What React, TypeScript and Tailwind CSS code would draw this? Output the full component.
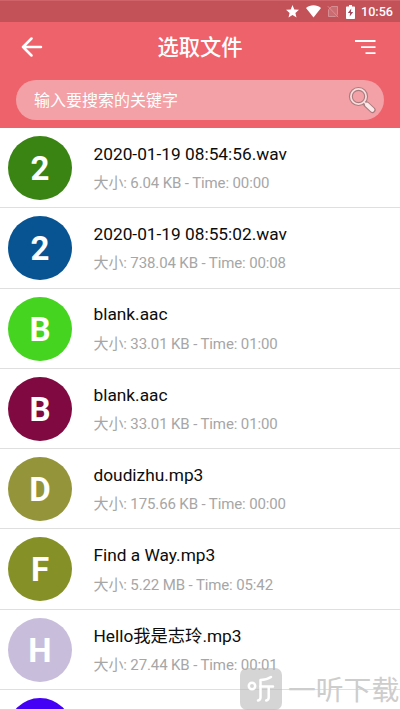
import React from "react";

type AudioFile = {
  letter: string;
  color: string;
  name: string;
  info: string;
};

const files: AudioFile[] = [
  { letter: "2", color: "bg-[#3a8413]", name: "2020-01-19 08:54:56.wav", info: "大小: 6.04 KB - Time: 00:00" },
  { letter: "2", color: "bg-[#085493]", name: "2020-01-19 08:55:02.wav", info: "大小: 738.04 KB - Time: 00:08" },
  { letter: "B", color: "bg-[#45d41f]", name: "blank.aac", info: "大小: 33.01 KB - Time: 01:00" },
  { letter: "B", color: "bg-[#810941]", name: "blank.aac", info: "大小: 33.01 KB - Time: 01:00" },
  { letter: "D", color: "bg-[#94953a]", name: "doudizhu.mp3", info: "大小: 175.66 KB - Time: 00:00" },
  { letter: "F", color: "bg-[#859126]", name: "Find a Way.mp3", info: "大小: 5.22 MB - Time: 05:42" },
  { letter: "H", color: "bg-[#c8bedb]", name: "Hello我是志玲.mp3", info: "大小: 27.44 KB - Time: 00:01" },
];

const StatusBar = () => (
  <div className="flex h-[22px] items-center justify-end border-t border-[#d0626a] bg-[#c25158] pr-[7px] text-white">
    <svg width="13" height="13" viewBox="0 0 13 13" className="mr-[7px]" fill="currentColor">
      <path d="M6.5 0l1.8 4.4 4.7.4-3.6 3.1 1.1 4.6-4-2.5-4 2.5 1.1-4.6L0 4.8l4.7-.4z" />
    </svg>
    <svg width="15" height="13" viewBox="0 0 15 13" className="mr-[6px]" fill="currentColor">
      <path d="M0 3C4-.6 11-.6 15 3L7.5 12.6z" />
    </svg>
    <svg width="12" height="13" viewBox="0 0 12 13" className="mr-[7px] opacity-35">
      <path d="M1 4.5L4.5 1H11v11H1z" fill="currentColor" opacity=".45" />
      <path d="M1.5 4.6L4.6 1.5h5.9v8.2M1.5 5v6.5h7M.8 1.2l10.4 11" fill="none" stroke="currentColor" />
    </svg>
    <svg width="9" height="14" viewBox="0 0 9 14" className="mr-[6px]">
      <path d="M3 0h3v1.4h2.2q.8 0 .8.8v11q0 .8-.8.8H.8Q0 14 0 13.2v-11q0-.8.8-.8H3z" fill="currentColor" />
      <path d="M5.3 3.5L1.8 8h2.3L3.7 11.4 7.2 6.9H4.9z" fill="#a4485d" />
    </svg>
    <span className="text-[12.6px] leading-4 font-medium">10:56</span>
  </div>
);

const SearchIcon = () => (
  <svg width="28" height="28" viewBox="0 0 28 28" fill="none">
    <path d="M18.5 18.5l6 5.5" stroke="#a87c7e" strokeWidth="6.2" strokeLinecap="round" />
    <path d="M15.5 15.5l3 3" stroke="#a87c7e" strokeWidth="3.5" />
    <circle cx="10.5" cy="10.5" r="7.6" stroke="#a87c7e" strokeWidth="4" />
    <circle cx="10.5" cy="10.5" r="7.6" stroke="#f9dcdd" strokeWidth="1.8" />
    <path d="M16 16l2.5 2.5" stroke="#f9dcdd" strokeWidth="1.5" />
    <path d="M19 18.8l5.3 5" stroke="#fbe9e9" strokeWidth="4.2" strokeLinecap="round" />
  </svg>
);

const Header = () => (
  <header className="h-[128px] shrink-0 bg-[#ee626b]">
    <StatusBar />
    <div className="flex h-[50px] items-center justify-between pr-[24px] pl-[21px] text-white">
      <button aria-label="Back" className="w-[24px]">
        <svg width="22" height="20" viewBox="0 0 22 20" fill="none" stroke="currentColor" strokeWidth="2.5" strokeLinecap="round" strokeLinejoin="round">
          <path d="M20 10H2M10.5 1.5L2 10l8.5 8.5" />
        </svg>
      </button>
      <h1 className="pt-[2px] text-[21.3px] leading-[30px] font-medium">选取文件</h1>
      <button aria-label="Sort" className="w-[21px]">
        <svg width="21" height="16" viewBox="0 0 21 16" fill="none" stroke="currentColor" strokeWidth="1.8">
          <path d="M0 2h20.5M6 8.2h14.5M10.5 14.2h10" />
        </svg>
      </button>
    </div>
    <div className="mx-4 mt-2 flex h-10 items-center justify-between rounded-full bg-[#f3a0a6] pr-2 pl-[18px]">
      <span className="pt-[2px] text-[16px] leading-6 text-white">输入要搜索的关键字</span>
      <SearchIcon />
    </div>
  </header>
);

const FileRow = ({ file }: { file: AudioFile }) => (
  <li className="flex h-[80.3px] shrink-0 border-b border-[#dfdfdf] pl-2">
    <div className={`mt-2 flex size-16 shrink-0 items-center justify-center rounded-full ${file.color}`}>
      <span className="pt-[2px] text-[33px] leading-10 font-bold text-white">{file.letter}</span>
    </div>
    <div className="ml-[21.5px] pt-[13.9px] whitespace-nowrap">
      <p className="h-6 text-[17.3px] leading-6 text-[#0c0c0c]">{file.name}</p>
      <p className="mt-[5.2px] h-6 text-[15px] leading-6 tracking-[-0.12px] text-[#a6a6a6]">{file.info}</p>
    </div>
  </li>
);

const Watermark = () => (
  <div className="absolute top-[668px] left-[240px] flex h-[42px] w-[160px] items-center whitespace-nowrap">
    <svg width="42" height="42" viewBox="0 0 42 42" className="shrink-0" fill="none">
      <rect width="42" height="42" rx="7" fill="#b9b9b9" fillOpacity=".6" />
      <g stroke="#fff" strokeWidth="2.5" strokeLinecap="round" strokeLinejoin="round">
        <circle cx="12" cy="18" r="3.2" />
        <path d="M31 9q-4 2.8-10.5 3V29.5q0 2.5-2.5 3" />
        <path d="M20.5 18.5H33M28.7 18.5V29.5q0 2.5-2.5 3" />
      </g>
    </svg>
    <span className="ml-[6px] pt-[4px] text-[27.8px] leading-9 text-[#cdcdcd]">一听下载</span>
  </div>
);

const App = () => {
  return (
    <div className="relative flex h-[710px] w-[400px] flex-col overflow-hidden bg-white font-[Roboto,'Noto_Sans_CJK_SC',sans-serif]">
      <Header />
      <ul className="flex min-h-0 flex-1 flex-col overflow-hidden border-b border-[#d8d8d8]">
        {files.map((file, i) => (
          <FileRow key={i} file={file} />
        ))}
        {/* next row, only the top of its avatar is on screen */}
        <li className="shrink-0 pl-2">
          <div className="mt-2 size-16 rounded-full bg-[#4400f5]" />
        </li>
      </ul>
      <Watermark />
    </div>
  );
};

export default App;
